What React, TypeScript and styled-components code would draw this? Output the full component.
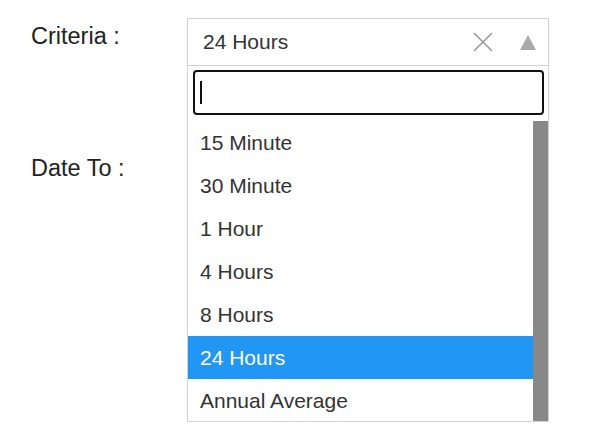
import React from "react";
import styled, { createGlobalStyle } from "styled-components";

const Global = createGlobalStyle`
  html, body { margin: 0; padding: 0; background: #fff; }
  body { font-family: "Liberation Sans", Arial, sans-serif; }
`;

const Page = styled.div`
  display: flex;
  align-items: flex-start;
  padding: 18px 0 0 31px;
`;

const LabelColumn = styled.div`
  width: 156px;
  display: flex;
  flex-direction: column;
  gap: 102px;
  padding-top: 3px;
`;

const Label = styled.div`
  font-size: 23.5px;
  line-height: 30px;
  color: #222;
  white-space: nowrap;
`;

const Select = styled.div`
  width: 360px;
  border: 1px solid #d2d2d2;
  display: flex;
  flex-direction: column;
`;

const Header = styled.div`
  height: 46px;
  display: flex;
  align-items: center;
  padding: 0 12px 0 15px;
  border-bottom: 1px solid #d2d2d2;
`;

const Value = styled.span`
  flex: 1;
  font-size: 21px;
  line-height: 46px;
  color: #333;
`;

const Clear = styled.svg`
  width: 20px;
  height: 20px;
  margin-right: 27px;
`;

const Arrow = styled.span`
  width: 0;
  height: 0;
  border-left: 8px solid transparent;
  border-right: 8px solid transparent;
  border-bottom: 15px solid #aaa;
`;

const SearchArea = styled.div`
  padding: 4px 4px 6px 5px;
`;

const SearchField = styled.div`
  height: 45px;
  box-sizing: border-box;
  border: 2px solid #111;
  border-radius: 4px;
  display: flex;
  align-items: center;
  padding-left: 5px;
`;

const Caret = styled.span`
  width: 2px;
  height: 23px;
  background: #111;
`;

const ListRow = styled.div`
  display: flex;
  height: 300px;
`;

const Options = styled.div`
  flex: 1;
  overflow: hidden;
`;

const Option = styled.div<{ $active?: boolean }>`
  height: 43px;
  line-height: 43px;
  padding-left: 12px;
  font-size: 21px;
  color: ${(p) => (p.$active ? "#fff" : "#333")};
  background: ${(p) => (p.$active ? "#2196f3" : "transparent")};
  white-space: nowrap;
`;

const ScrollThumb = styled.div`
  width: 15px;
  background: #888;
`;

const options = [
  "15 Minute",
  "30 Minute",
  "1 Hour",
  "4 Hours",
  "8 Hours",
  "24 Hours",
  "Annual Average",
];

export default function App() {
  return (
    <>
      <Global />
      <Page>
        <LabelColumn>
          <Label>Criteria :</Label>
          <Label>Date To :</Label>
        </LabelColumn>
        <Select>
          <Header>
            <Value>24 Hours</Value>
            <Clear viewBox="0 0 20 20">
              <path d="M1 1 L19 19 M19 1 L1 19" stroke="#9a9a9a" strokeWidth="1.6" fill="none" />
            </Clear>
            <Arrow />
          </Header>
          <SearchArea>
            <SearchField>
              <Caret />
            </SearchField>
          </SearchArea>
          <ListRow>
            <Options>
              {options.map((o) => (
                <Option key={o} $active={o === "24 Hours"}>
                  {o}
                </Option>
              ))}
            </Options>
            <ScrollThumb />
          </ListRow>
        </Select>
      </Page>
    </>
  );
}
